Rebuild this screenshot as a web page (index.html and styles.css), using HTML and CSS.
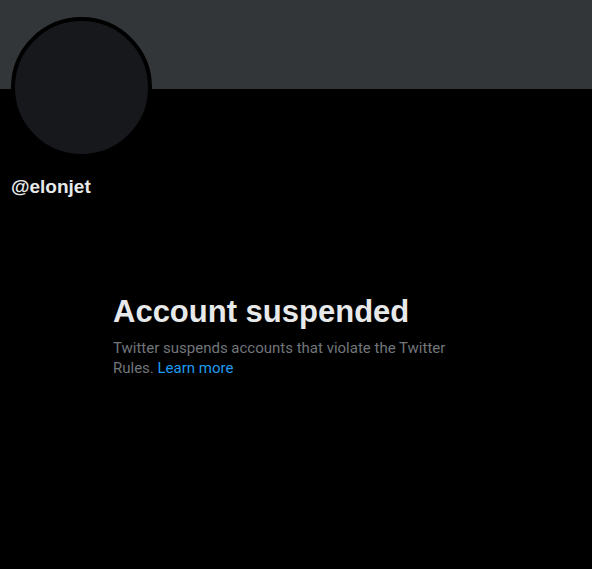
FILE: index.html
```html
<!DOCTYPE html>
<html>
<head>
<meta charset="utf-8">
<link rel="stylesheet" href="styles.css">
</head>
<body>
<div class="page">
  <div class="banner"></div>
  <div class="profile">
    <div class="avatar-row"><div class="avatar"></div></div>
    <div class="handle">@elonjet</div>
  </div>
  <div class="notice">
    <h1 class="title">Account suspended</h1>
    <p class="desc">Twitter suspends accounts that violate the Twitter Rules. <a class="link" href="#">Learn more</a></p>
  </div>
</div>
</body>
</html>
```
FILE: styles.css
```css
html, body {
  margin: 0;
  padding: 0;
  background: #000;
}
.page {
  width: 592px;
  height: 569px;
  background: #000;
  font-family: Roboto, "Liberation Sans", Arial, sans-serif;
  overflow: hidden;
}
.banner {
  height: 89px;
  background: #333639;
}
.profile {
  padding: 0 11px;
}
.avatar-row {
  height: 72px;
  position: relative;
}
.avatar {
  position: absolute;
  left: 0;
  top: -72px;
  width: 133px;
  height: 133px;
  border-radius: 50%;
  background: #16181c;
  border: 4px solid #000;
}
.handle {
  margin-top: 14px;
  color: #e7e9ea;
  font-family: "Liberation Sans", Arial, sans-serif;
  font-weight: bold;
  font-size: 19px;
  line-height: 24px;
}
.notice {
  margin: 95px 0 0 113px;
  width: 345px;
}
.title {
  margin: 0;
  color: #e7e9ea;
  font-family: "Liberation Sans", Arial, sans-serif;
  font-size: 31px;
  line-height: 36px;
  font-weight: bold;
}
.desc {
  margin: 8px 0 0;
  color: #71767b;
  font-size: 15px;
  line-height: 20px;
}
.link {
  color: #1d9bf0;
  text-decoration: none;
}
```
